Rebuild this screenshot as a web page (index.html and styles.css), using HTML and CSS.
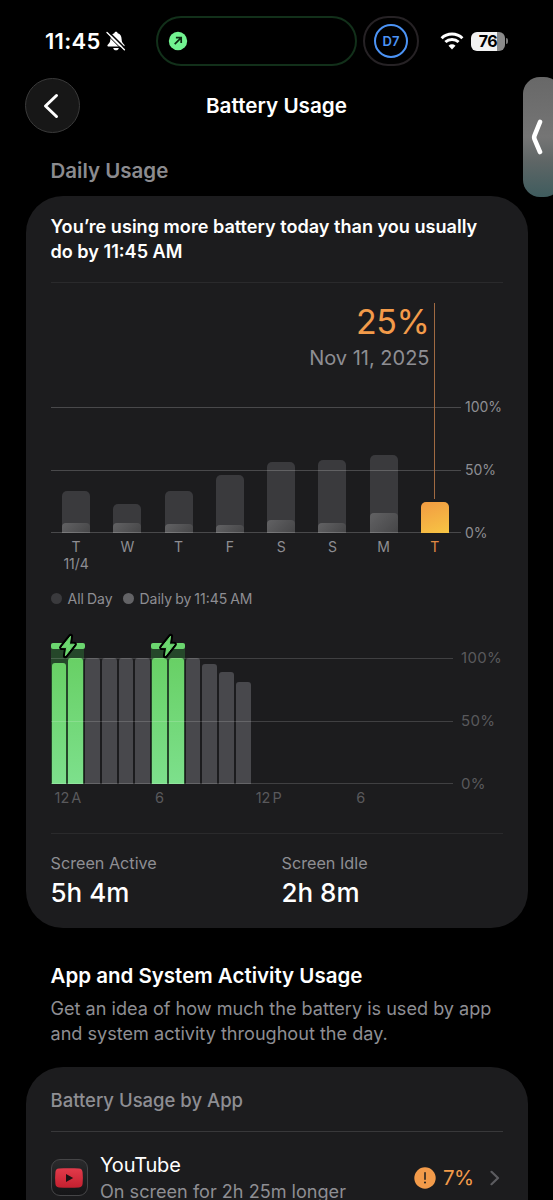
FILE: index.html
```html
<!DOCTYPE html>
<html lang="en">
<head>
<meta charset="UTF-8">
<meta name="viewport" content="width=device-width, initial-scale=1.0">
<title>Battery Usage</title>
<link rel="stylesheet" href="styles.css">
</head>
<body>
<div class="screen">
  <div class="status-bar">
    <span class="time">11:45</span>
    <svg class="bell" width="20" height="20" viewBox="0 0 20 20">
      <path d="M10 .8c-1 0-1.6.7-1.7 1.5C5.700 3 4.500 5.200 4.400 8c-.1 3-.9 4-2.200 5.200-.6.6-.8 1-.8 1.400 0 .6.5 1 1.200 1h14.800c.7 0 1.200-.4 1.200-1 0-.4-.2-.8-.8-1.400C16.500 12 15.700 11 15.600 8c-.1-2.800-1.300-5-3.900-5.700C11.600 1.500 11 .8 10 .8z" fill="#fff"/>
      <path d="M7.200 16.900h5.600c-.3 1.400-1.400 2.300-2.800 2.300s-2.500-.9-2.800-2.300z" fill="#fff"/>
      <path d="M2.300 .4L20 18.100" stroke="#000" stroke-width="1.500"/>
      <path d="M1 1.400L18.400 18.800" stroke="#fff" stroke-width="1.400" stroke-linecap="round"/>
      <path d="M0 2.600L16.800 19.400" stroke="#000" stroke-width="1"/>
    </svg>
    <div class="island">
      <svg width="20" height="20" viewBox="0 0 20 20">
        <circle cx="10" cy="10" r="9.200" fill="#72f391"/>
        <path d="M6.700 13.200L13 6.900M7.900 6.700h5.300v5.300" fill="none" stroke="#0b2a12" stroke-width="1.700"/>
      </svg>
    </div>
    <div class="focus"><span class="focus-ring">D7</span></div>
    <svg class="wifi" width="24" height="18" viewBox="0 0 24 18">
      <path d="M1.600 6.200C7.300.6 16.700.6 22.400 6.200" fill="none" stroke="#fff" stroke-width="3"/>
      <path d="M5.400 10C9 6.600 15 6.600 18.600 10" fill="none" stroke="#fff" stroke-width="3"/>
      <path d="M12 17.400l-3.500-3.700c2-1.800 5-1.800 7 0z" fill="#fff"/>
    </svg>
    <div class="battery"><span>76</span></div>
    <div class="battery-tip"></div>
  </div>

  <div class="nav">
    <div class="back">
      <svg width="16" height="26" viewBox="0 0 16 26">
        <path d="M13.500 2.500L2.500 13l11 10.500" fill="none" stroke="#fff" stroke-width="3" stroke-linecap="round" stroke-linejoin="round"/>
      </svg>
    </div>
    <h1>Battery Usage</h1>
  </div>

  <div class="side-tab">
    <svg width="12" height="36" viewBox="0 0 12 36">
      <path d="M9 3L3.600 16.300c-.6 1.400-.6 2.600 0 4L9 33" fill="none" stroke="#fff" stroke-width="4.600" stroke-linecap="round" stroke-linejoin="round"/>
    </svg>
  </div>

  <h2 class="section-label">Daily Usage</h2>

  <div class="card daily">
    <p class="summary">You’re using more battery today than you usually<br>do by 11:45 AM</p>

    <div class="readout">
      <div class="percent">25%</div>
      <div class="date">Nov 11, 2025</div>
    </div>

    <!-- Last 8 days -->
    <div class="week">
      <div class="plot">
        <div class="day"><div class="bar" style="height: 33.2%"><i style="height: 24%"></i></div></div>
        <div class="day"><div class="bar" style="height: 23.2%"><i style="height: 34%"></i></div></div>
        <div class="day"><div class="bar" style="height: 33.2%"><i style="height: 21%"></i></div></div>
        <div class="day"><div class="bar" style="height: 46.2%"><i style="height: 13%"></i></div></div>
        <div class="day"><div class="bar" style="height: 56%"><i style="height: 18%"></i></div></div>
        <div class="day"><div class="bar" style="height: 58%"><i style="height: 14%"></i></div></div>
        <div class="day"><div class="bar" style="height: 62%"><i style="height: 26%"></i></div></div>
        <div class="day selected"><div class="bar" style="height: 25%"></div></div>
        <div class="grid"><b></b><b></b><b></b></div>
        <div class="marker"></div>
      </div>
      <div class="scale"><span>100%</span><span>50%</span><span>0%</span></div>
    </div>
    <div class="days">
      <span>T<br>11/4</span><span>W</span><span>T</span><span>F</span><span>S</span><span>S</span><span>M</span><span class="today">T</span>
    </div>

    <div class="legend">
      <span class="dot"></span><span class="all-day">All Day</span>
      <span class="dot light"></span><span class="by-now">Daily by 11:45 AM</span>
    </div>

    <!-- Battery level by hour -->
    <div class="hours">
      <div class="plot">
        <div class="hour charging"><span class="level"><span class="bar" style="height: 96%"></span></span></div>
        <div class="hour charging"><span class="level"><span class="bar" style="height: 100%"></span></span></div>
        <div class="hour"><span class="level"><span class="bar" style="height: 100%"></span></span></div>
        <div class="hour"><span class="level"><span class="bar" style="height: 100%"></span></span></div>
        <div class="hour"><span class="level"><span class="bar" style="height: 100%"></span></span></div>
        <div class="hour"><span class="level"><span class="bar" style="height: 100%"></span></span></div>
        <div class="hour charging"><span class="level"><span class="bar" style="height: 100%"></span></span></div>
        <div class="hour charging"><span class="level"><span class="bar" style="height: 100%"></span></span></div>
        <div class="hour"><span class="level"><span class="bar" style="height: 100%"></span></span></div>
        <div class="hour"><span class="level"><span class="bar" style="height: 95%"></span></span></div>
        <div class="hour"><span class="level"><span class="bar" style="height: 89%"></span></span></div>
        <div class="hour"><span class="level"><span class="bar" style="height: 81%"></span></span></div>
        <div class="grid"><b></b><b></b><b></b></div>
        <div class="charge-cap">
          <svg width="20" height="26" viewBox="0 0 20 26">
            <path d="M12.600 3.200L3.600 14.600h5L7.400 22.800l9-11.600h-5z" fill="#6bd66f" stroke="#000" stroke-width="5" stroke-linejoin="round"/>
            <path d="M12.600 3.200L3.600 14.600h5L7.400 22.800l9-11.600h-5z" fill="#6bd66f" stroke="#6bd66f" stroke-width="1" stroke-linejoin="round"/>
          </svg>
        </div>
        <div class="charge-cap morning">
          <svg width="20" height="26" viewBox="0 0 20 26">
            <path d="M12.600 3.200L3.600 14.600h5L7.400 22.800l9-11.600h-5z" fill="#6bd66f" stroke="#000" stroke-width="5" stroke-linejoin="round"/>
            <path d="M12.600 3.200L3.600 14.600h5L7.400 22.800l9-11.600h-5z" fill="#6bd66f" stroke="#6bd66f" stroke-width="1" stroke-linejoin="round"/>
          </svg>
        </div>
      </div>
      <div class="scale"><span>100%</span><span>50%</span><span>0%</span></div>
    </div>
    <div class="hour-labels"><span>12 A</span><span>6</span><span>12 P</span><span>6</span></div>

    <div class="totals">
      <div><div class="label">Screen Active</div><div class="value">5h 4m</div></div>
      <div><div class="label">Screen Idle</div><div class="value">2h 8m</div></div>
    </div>
  </div>

  <div class="activity">
    <h2>App and System Activity Usage</h2>
    <p>Get an idea of how much the battery is used by app<br>and system activity throughout the day.</p>
  </div>

  <div class="card apps">
    <h3>Battery Usage by App</h3>
    <div class="app">
      <div class="app-icon">
        <svg width="28" height="20" viewBox="0 0 28 20">
          <defs>
            <linearGradient id="red" x1="0" y1="0" x2="0" y2="1">
              <stop offset="0" stop-color="#e23b4b"/>
              <stop offset="1" stop-color="#c4202f"/>
            </linearGradient>
          </defs>
          <path d="M4 .6C10 0 18 0 24 .6c2.400.2 3.400 1.400 3.600 3.600.4 3.800.4 7.800 0 11.600-.2 2.200-1.200 3.400-3.600 3.600-6 .6-14 .6-20 0C1.600 19.200.6 18 .4 15.800 0 12 0 8 .4 4.200.6 2 1.600.8 4 .6z" fill="url(#red)"/>
          <path d="M11 6v8l7.200-4z" fill="#1b1113"/>
        </svg>
      </div>
      <div class="app-text">
        <div class="name">YouTube</div>
        <div class="detail">On screen for 2h 25m longer</div>
      </div>
      <svg class="alert" width="22" height="22" viewBox="0 0 22 22">
        <circle cx="11" cy="11" r="10.700" fill="#f39b4a"/>
        <path d="M11 5.800v6.400" stroke="#1c1c1e" stroke-width="1.500" stroke-linecap="round"/>
        <circle cx="11" cy="15.400" r="1" fill="#1c1c1e"/>
      </svg>
      <span class="share">7%</span>
      <svg class="chevron" width="10" height="16" viewBox="0 0 10 16">
        <path d="M1.500 1.800L8 8l-6.500 6.200" fill="none" stroke="#5c5c60" stroke-width="2.200" stroke-linecap="round" stroke-linejoin="round"/>
      </svg>
    </div>
  </div>
</div>
</body>
</html>
```
FILE: styles.css
```css
* {
  box-sizing: border-box;
}
body {
  margin: 0;
  background: #000;
  color: #fff;
  font-family: Inter, "Liberation Sans", sans-serif;
}
h1, h2, h3, p {
  margin: 0;
}
svg {
  display: block;
  flex: none;
}
.screen {
  position: relative;
  width: 553px;
  height: 1200px;
  overflow: hidden;
}

/* Status bar */
.status-bar {
  display: flex;
  align-items: center;
  height: 50px;
  margin-top: 16px;
  padding-left: 45px;
}
.time {
  width: 61px;
  font-size: 22px;
  font-weight: 600;
  letter-spacing: 0.3px;
}
.island {
  display: flex;
  align-items: center;
  width: 201px;
  height: 50px;
  margin-left: 30px;
  padding-left: 10px;
  border: 2px solid #12301a;
  border-radius: 25px;
}
.focus {
  display: flex;
  align-items: center;
  justify-content: center;
  width: 56px;
  height: 50px;
  margin-left: 6px;
  border: 2px solid #262225;
  border-radius: 25px;
}
.focus-ring {
  width: 34px;
  height: 34px;
  border: 2.5px solid #4b93f5;
  border-radius: 50%;
  color: #4b93f5;
  font-size: 13px;
  font-weight: 600;
  line-height: 30px;
  text-align: center;
}
.wifi {
  margin-left: 21px;
}
.battery {
  width: 34px;
  height: 19px;
  margin-left: 7px;
  border-radius: 6px;
  background: linear-gradient(to right, #f2f2f2 76%, #8a8a8a 76%);
  color: #000;
  font-size: 16px;
  font-weight: 700;
  line-height: 19px;
  letter-spacing: -0.5px;
  text-align: center;
}
.battery-tip {
  width: 2px;
  height: 6px;
  margin-left: 1px;
  border-radius: 0 2px 2px 0;
  background: #777;
}

/* Navigation */
.nav {
  display: grid;
  grid-template-columns: 55px 1fr 55px;
  align-items: center;
  height: 55px;
  margin: 12px 25px 0;
}
.back {
  display: flex;
  align-items: center;
  justify-content: center;
  height: 55px;
  padding-right: 4px;
  border: 1px solid #3a3a3a;
  border-radius: 50%;
  background: #171717;
}
.nav h1 {
  font-size: 20.7px;
  font-weight: 600;
  text-align: center;
}
.side-tab {
  position: absolute;
  top: 77px;
  right: -8px;
  display: flex;
  align-items: center;
  width: 38px;
  height: 120px;
  padding-left: 8px;
  border-radius: 17px;
  background: linear-gradient(#686868, #757575 50%, #5f6666 70%, #3f5c5e);
}
.section-label {
  margin: 25px 0 0 50.5px;
  color: #8b8b8f;
  font-size: 20.5px;
  font-weight: 600;
  line-height: 26px;
}

/* Cards */
.card {
  margin: 0 25.5px;
  padding: 0 25px;
  border-radius: 37px;
  background: #1c1c1e;
}
.daily {
  height: 732px;
  margin-top: 12px;
}
.summary {
  height: 87px;
  padding-top: 18px;
  border-bottom: 1px solid #2a2a2c;
  font-size: 18.1px;
  font-weight: 600;
  line-height: 25px;
  white-space: nowrap;
}
.readout {
  width: 379px;
  height: 124px;
  padding-top: 19px;
  text-align: right;
}
.percent {
  color: #f39b4a;
  font-size: 34px;
  line-height: 40px;
  letter-spacing: -0.4px;
}
.date {
  margin-top: 3px;
  color: #8e8e93;
  font-size: 20px;
  line-height: 26px;
}

/* Charts */
.week, .hours {
  display: flex;
}
.plot {
  position: relative;
  display: flex;
  height: 126px;
}
.week .plot {
  width: 410px;
}
.hours .plot {
  width: 402px;
}
.grid {
  position: absolute;
  inset: 0;
  display: flex;
  flex-direction: column;
  justify-content: space-between;
}
.grid b {
  height: 1px;
  background: rgba(255, 255, 255, 0.2);
}
.day {
  display: flex;
  flex: 1;
  align-items: flex-end;
  justify-content: center;
}
.day .bar {
  display: flex;
  align-items: flex-end;
  width: 28px;
  border-radius: 5px 5px 0 0;
  background: #3a3a3d;
}
.day .bar i {
  width: 28px;
  border-radius: 4px 4px 0 0;
  background: linear-gradient(135deg, #626264, #454547);
}
.day.selected {
  z-index: 1;
}
.selected .bar {
  background: linear-gradient(160deg, #f29b42, #f7c544);
}
.marker {
  position: absolute;
  top: -104px;
  left: 383px;
  width: 1px;
  height: 196px;
  background: #a06a42;
}
.scale {
  display: flex;
  flex-direction: column;
  justify-content: space-between;
  height: 144px;
  margin: -9px 0;
  padding-left: 4.5px;
  color: #8e8e93;
  font-size: 14px;
  line-height: 18px;
}
.days {
  display: flex;
  width: 410px;
  height: 46px;
  padding-top: 5px;
  color: #8e8e93;
  font-size: 14px;
  line-height: 17px;
  text-align: center;
}
.days span {
  flex: 1;
}
.days .today {
  color: #e28a44;
}
.legend {
  display: flex;
  align-items: center;
  height: 38px;
  color: #8e8e93;
  font-size: 14px;
  word-spacing: -1px;
}
.dot {
  width: 11px;
  height: 11px;
  margin-right: 6px;
  border-radius: 50%;
  background: #3a3a3d;
}
.dot.light {
  margin-left: 10px;
  background: #636366;
}
.hours {
  margin-top: 41px;
}
.hours .scale {
  padding-left: 8.5px;
  color: #59595c;
  font-size: 15px;
  letter-spacing: 0.3px;
}
.hours .grid b {
  background: rgba(255, 255, 255, 0.16);
}
.hour {
  display: flex;
  align-items: flex-end;
  width: 16.77px;
  padding: 0 1px;
}
.level {
  display: flex;
  align-items: flex-end;
  width: 100%;
  height: 126px;
}
.level .bar {
  width: 100%;
  border-radius: 3px 3px 0 0;
  background: #48484c;
}
.hour.charging {
  height: 140px;
  margin-top: -14px;
  background: #25472a;
}
.charging .bar {
  background: linear-gradient(#68d065, #7de08c);
}
.charge-cap {
  position: absolute;
  top: -15px;
  left: 0;
  display: flex;
  align-items: center;
  justify-content: center;
  width: 34px;
  height: 6px;
  border-radius: 2px;
  background: #6bd66f;
}
.charge-cap.morning {
  left: 100.5px;
}
.hour-labels {
  display: flex;
  width: 402px;
  height: 49px;
  padding: 5px 0 0 4px;
  color: #59595c;
  font-size: 14.5px;
  line-height: 18px;
  word-spacing: -2px;
}
.hour-labels span {
  flex: none;
  width: 100.6px;
}
.totals {
  display: grid;
  grid-template-columns: 231px 1fr;
  padding-top: 19px;
  border-top: 1px solid #2a2a2c;
}
.label {
  color: #8e8e93;
  font-size: 16.2px;
  line-height: 20px;
}
.value {
  font-size: 26px;
  font-weight: 500;
  line-height: 32px;
  margin-top: 4px;
}

/* App activity */
.activity {
  height: 139px;
  padding: 35px 50.5px 0;
}
.activity h2 {
  font-size: 20.5px;
  font-weight: 600;
  line-height: 26px;
}
.activity p {
  margin-top: 7px;
  color: #8e8e93;
  font-size: 18.1px;
  line-height: 25px;
  white-space: nowrap;
}
.apps {
  height: 300px;
}
.apps h3 {
  height: 65px;
  padding-top: 20px;
  border-bottom: 1px solid #38383a;
  color: #8e8e93;
  font-size: 18.5px;
  font-weight: 500;
  line-height: 26px;
}
.app {
  display: flex;
  align-items: center;
  height: 91px;
  white-space: nowrap;
}
.app-icon {
  display: flex;
  align-items: center;
  justify-content: center;
  width: 37px;
  height: 37px;
  border: 1px solid #454547;
  border-radius: 9px;
  background: linear-gradient(#2a2a2c, #151517);
}
.app-text {
  width: 314px;
  margin-left: 12.5px;
}
.name {
  font-size: 20px;
  line-height: 26px;
  letter-spacing: -0.2px;
}
.detail {
  color: #8e8e93;
  font-size: 18.1px;
  line-height: 26px;
}
.share {
  width: 47px;
  margin-left: 7px;
  color: #f39b4a;
  font-size: 20.5px;
  letter-spacing: -0.5px;
}
```
